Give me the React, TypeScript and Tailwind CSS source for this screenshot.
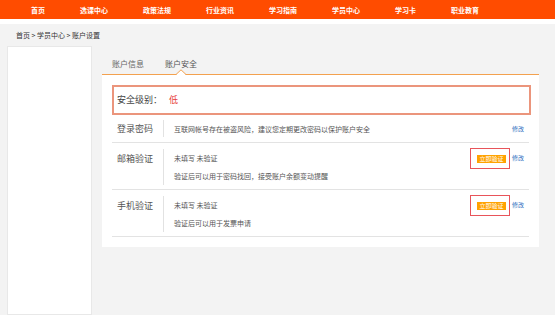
import React from "react";

const navItems = ["首页", "选课中心", "政策法规", "行业资讯", "学习指南", "学员中心", "学习卡", "职业教育"];

function VerifyButton() {
  return (
    <div className="flex h-[21px] w-[40px] items-center border border-[#e8545a] pl-[6px]">
      <span className="flex h-[8px] w-[29px] items-center justify-center bg-[#ffa200] text-[6px] leading-[8px] text-white">
        立即验证
      </span>
    </div>
  );
}

function VerifyRow({ label, line2 }: { label: string; line2: string }) {
  return (
    <div className="flex h-[47px] items-start border-b border-[#e3e3e3]">
      <div className="w-[51px] pl-[5px] pt-[10px] text-[9px] leading-[12px] text-[#555]">{label}</div>
      <div className="mt-[6px] h-[36px] w-px bg-[#e2e2e2]" />
      <div className="flex-1 pl-[10px] pt-[10px] text-[7px] leading-[10px] text-[#555]">
        <div>未填写 未验证</div>
        <div className="mt-[8px]">{line2}</div>
      </div>
      <div className="pt-[5px]">
        <VerifyButton />
      </div>
      <div className="w-[19px] pl-[2px] pt-[10px] text-[6px] leading-[10px] text-[#2f6fc0]">修改</div>
    </div>
  );
}

export default function App() {
  return (
    <div
      className="flex h-[315px] w-[555px] flex-col overflow-hidden bg-[#f3f3f3]"
      style={{ fontFamily: '"Noto Sans CJK SC", "Noto Sans", sans-serif' }}
    >
      <div className="flex h-[19px] items-center gap-[35px] bg-[#ff4c00] pl-[31px] text-[7px] font-bold leading-[10px] text-white">
        {navItems.map((n) => (
          <span key={n}>{n}</span>
        ))}
      </div>
      <div className="h-[5px] bg-white" />
      <div className="flex h-[22px] items-center pl-[16px] text-[7px] text-[#333]">
        首页 &gt; 学员中心 &gt; 账户设置
      </div>
      <div className="flex flex-1 items-stretch pl-[7px]">
        <div className="w-[85px] border border-[#e8e8e8] bg-white" />
        <div className="ml-[10px] flex w-[437px] flex-col self-start">
          <div className="relative flex h-[29px] items-start gap-[21px] border-b border-[#f3a14f] pl-[10px] pt-[13px] text-[8px] leading-[10px] text-[#666]">
            <span>账户信息</span>
            <span className="text-[#555]">账户安全</span>
            <svg className="absolute bottom-[-1px] left-[74px]" width="10" height="6" viewBox="0 0 10 6">
              <polygon points="0,6 5,0.8 10,6" fill="#ffffff" />
              <polyline points="0,5.5 5,0.8 10,5.5" fill="none" stroke="#f3a14f" strokeWidth="1" />
            </svg>
          </div>
          <div className="bg-white px-[10px] pb-[10px] pt-[10px]">
            <div className="-mr-[2px] flex h-[30px] items-center border-2 border-[#eb957c] pl-[3px] text-[9px] text-[#444]">
              <span>安全级别：</span>
              <span className="ml-[7px] text-[#e8403c]">低</span>
            </div>
            <div className="flex h-[28px] items-center border-b border-[#e3e3e3]">
              <div className="w-[51px] pl-[5px] text-[9px] leading-[12px] text-[#555]">登录密码</div>
              <div className="h-[17px] w-px bg-[#e2e2e2]" />
              <div className="flex-1 pl-[10px] text-[7px] leading-[10px] text-[#555]">
                互联网帐号存在被盗风险，建议您定期更改密码以保护账户安全
              </div>
              <div className="w-[17px] text-[6px] leading-[10px] text-[#2f6fc0]">修改</div>
            </div>
            <VerifyRow label="邮箱验证" line2="验证后可以用于密码找回，接受账户余额变动提醒" />
            <VerifyRow label="手机验证" line2="验证后可以用于发票申请" />
          </div>
        </div>
      </div>
    </div>
  );
}
